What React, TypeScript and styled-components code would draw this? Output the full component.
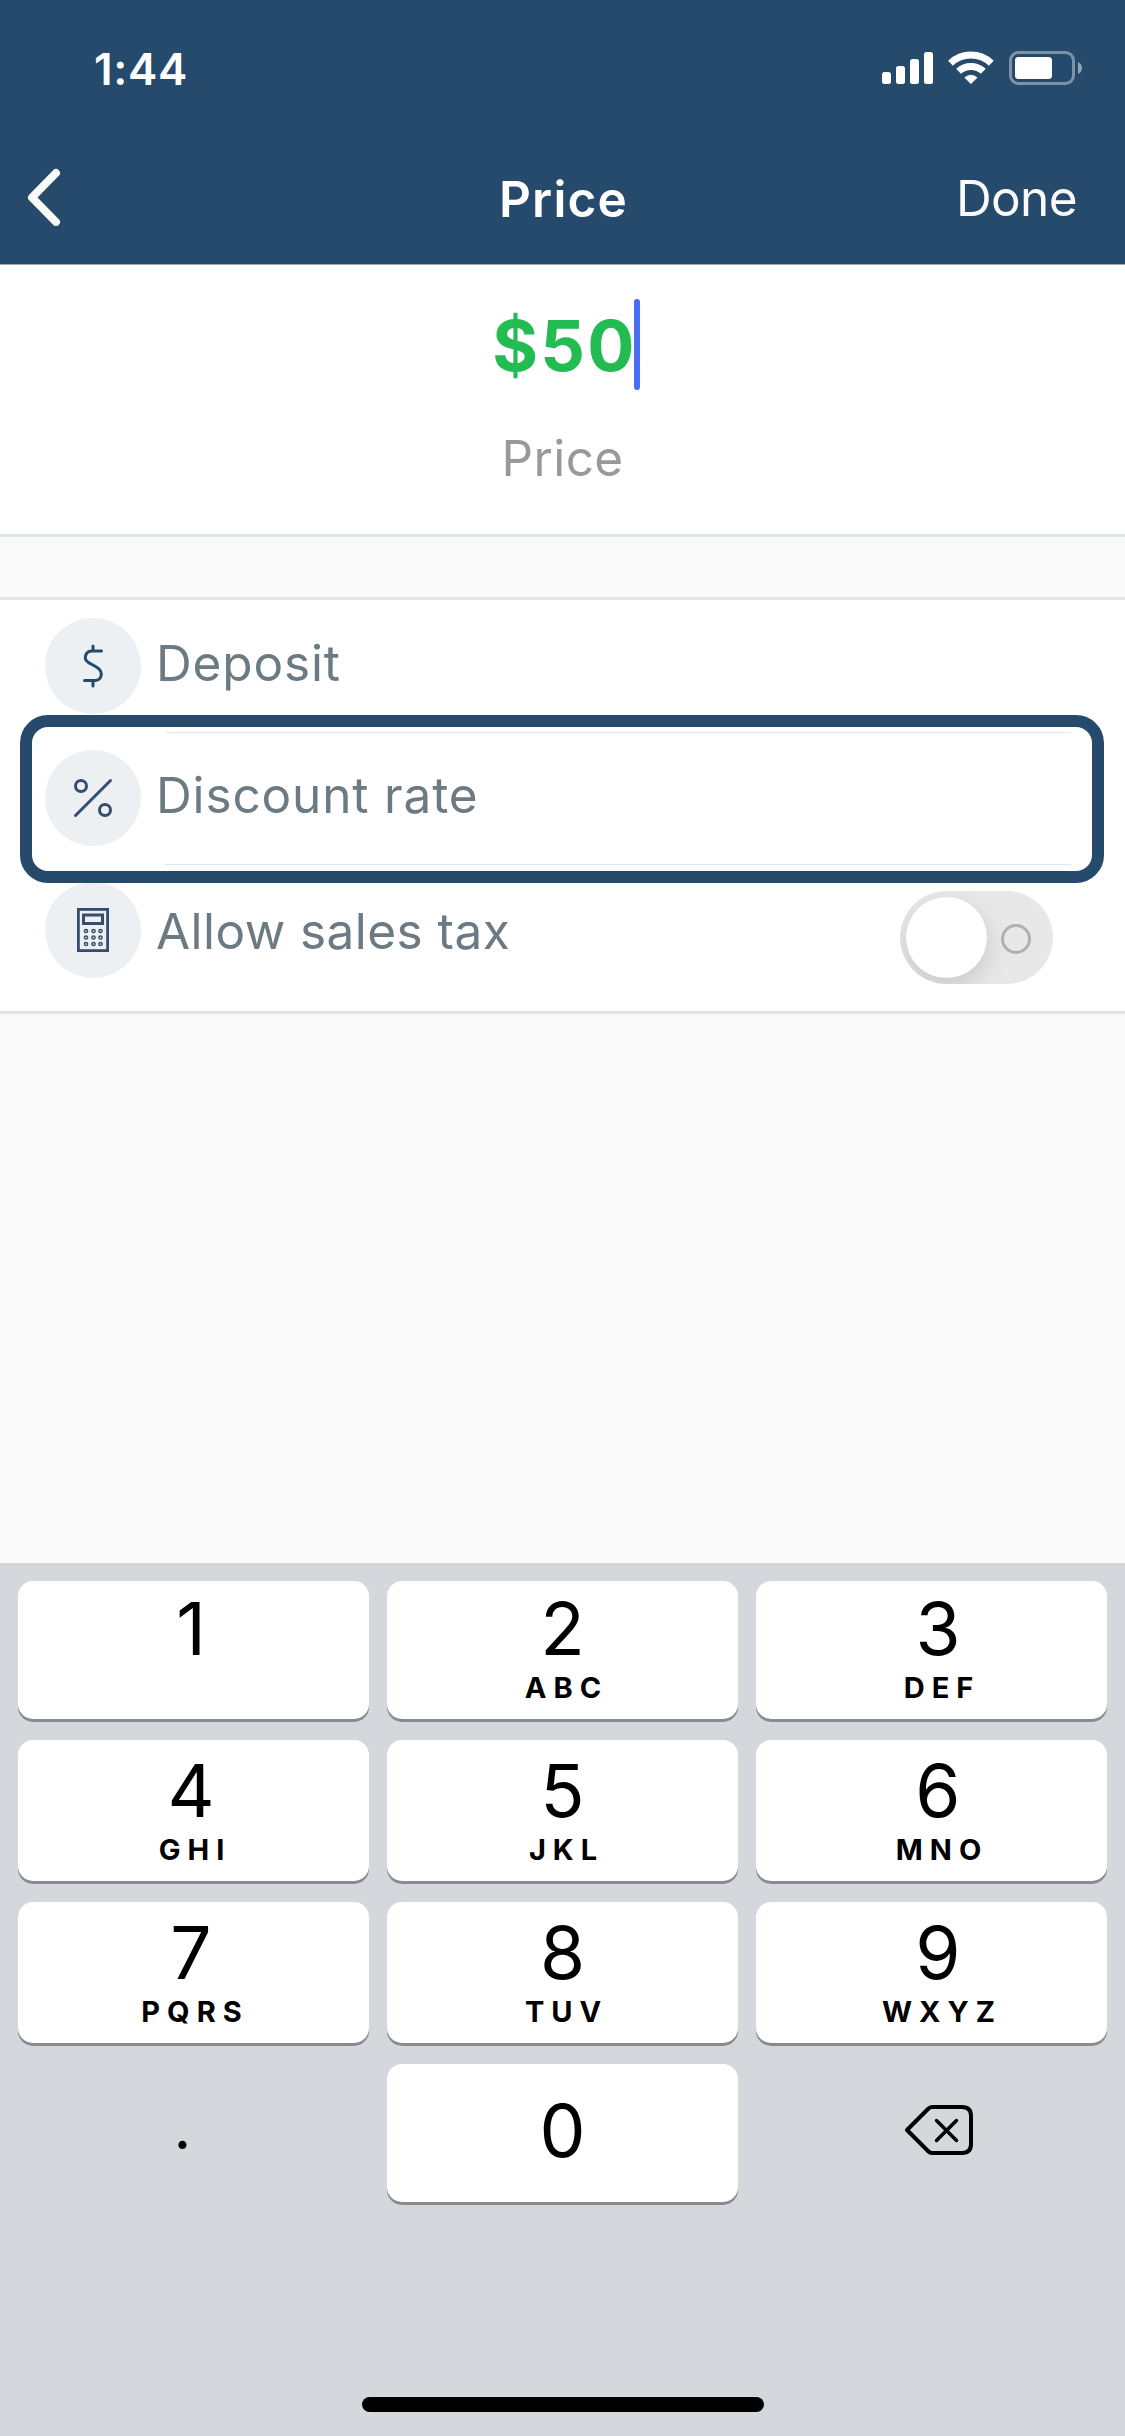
import React from "react";
import styled, { createGlobalStyle } from "styled-components";

const navy = "#254a6b";

const GlobalStyle = createGlobalStyle`
  *, *::before, *::after { box-sizing: border-box; }
  body { margin: 0; background: #fafafa; }
`;

const Screen = styled.div`
  width: 1125px;
  height: 2436px;
  display: flex;
  flex-direction: column;
  overflow: hidden;
  background: #fafafa;
  font-family: Inter, "Liberation Sans", sans-serif;
`;

const Header = styled.header`
  height: 265px;
  flex: none;
  background: ${navy};
  border-bottom: 1px solid #9aa9b4;
  color: #fff;
`;

const StatusBar = styled.div`
  height: 132px;
  padding: 3px 43px 0 94px;
  display: flex;
  align-items: center;
  justify-content: space-between;
`;

const Clock = styled.span`
  margin-top: 2px;
  font-size: 44px;
  font-weight: 600;
  line-height: 60px;
  letter-spacing: 0.7px;
`;

const StatusIcons = styled.svg`
  display: block;
  margin-top: 3px;
`;

const NavBar = styled.nav`
  height: 132px;
  padding: 0 48px 0 26px;
  display: grid;
  grid-template-columns: 1fr auto 1fr;
  align-items: center;
`;

const BackIcon = styled.svg`
  display: block;
  margin-bottom: 3px;
`;

const NavTitle = styled.h1`
  margin: 2px 0 0 24px;
  font-size: 49.5px;
  font-weight: 600;
  line-height: 60px;
  letter-spacing: 1.2px;
`;

const NavAction = styled.button`
  justify-self: end;
  padding: 0;
  border: 0;
  background: none;
  color: #fafaf8;
  font: 400 49.5px/60px Inter, "Liberation Sans", sans-serif;
  letter-spacing: -0.6px;
`;

const PricePanel = styled.section`
  height: 272px;
  flex: none;
  display: flex;
  flex-direction: column;
  align-items: center;
  background: #fff;
  border-bottom: 3px solid #dde5e7;
`;

const Amount = styled.div`
  height: 91px;
  margin-top: 34px;
  padding: 2px 0 0 7px;
  display: flex;
  align-items: center;
  color: #22bc53;
  font-size: 70px;
  font-weight: 700;
  letter-spacing: 2.2px;
`;

const Caret = styled.i`
  width: 6px;
  height: 91px;
  margin: -2px 0 0 -3px;
  border-radius: 3px;
  background: #466ff3;
`;

const AmountLabel = styled.div`
  margin-top: 38px;
  color: #999;
  font-size: 49.5px;
  line-height: 60px;
  letter-spacing: 0.4px;
`;

const Options = styled.section`
  position: relative;
  height: 417px;
  flex: none;
  margin-top: 60px;
  background: #fff;
  border: solid #dde5e7;
  border-width: 3px 0;
`;

const OptionRow = styled.div`
  height: 132px;
  padding: 18px 72px 0 45px;
  display: flex;
  align-items: flex-start;

  & + & {
    background: linear-gradient(#dde6ea, #dde6ea) 165px 0 / 906px 1px no-repeat;
  }
`;

const IconDisc = styled.span`
  width: 96px;
  height: 96px;
  flex: none;
  display: flex;
  align-items: center;
  justify-content: center;
  border-radius: 50%;
  background: #edf0f3;
`;

const OptionLabel = styled.span<{ $drop?: number; $tracking?: number }>`
  flex: 1;
  margin: ${({ $drop = 0 }) => 15 + $drop}px 0 0 15px;
  color: #6b7a83;
  font-size: 49.5px;
  line-height: 60px;
  letter-spacing: ${({ $tracking = 0.85 }) => $tracking}px;
`;

const Highlight = styled.div`
  position: absolute;
  top: 115px;
  left: 20px;
  width: 1084px;
  height: 168px;
  border: 12px solid ${navy};
  border-radius: 28px;
`;

const Toggle = styled.span`
  width: 153px;
  height: 93px;
  margin-top: 9px;
  padding: 6px 22px 6px 6px;
  display: flex;
  align-items: center;
  justify-content: space-between;
  overflow: hidden;
  border-radius: 47px;
  background: #e8e8e8;
`;

const Knob = styled.i`
  width: 81px;
  height: 81px;
  border-radius: 50%;
  background: #fff;
  box-shadow: 0 9px 24px rgba(0, 0, 0, 0.14);
`;

const OffMark = styled.i`
  width: 30px;
  height: 30px;
  margin-top: 3px;
  border: 3px solid #b0b0b0;
  border-radius: 50%;
`;

const Keyboard = styled.section`
  height: 873px;
  margin-top: auto;
  padding: 18px 18px 24px;
  display: flex;
  flex-direction: column;
  align-items: center;
  justify-content: space-between;
  background: #d4d7dc;
`;

const Keys = styled.div`
  display: grid;
  grid-template-columns: repeat(3, 351px);
  grid-template-rows: 138px 141px 141px 138px;
  gap: 21px 18px;
`;

const Key = styled.button<{ $shift: number; $plain?: boolean; $drop: number }>`
  padding: ${({ $drop }) => $drop}px 0 0 ${({ $plain, $shift }) => ($plain && $shift > 0 ? $shift * 2 : 0)}px;
  border: 0;
  border-radius: 15px;
  display: flex;
  flex-direction: column;
  align-items: center;
  text-indent: ${({ $shift }) => $shift * 2}px;
  background: ${({ $plain }) => ($plain ? "none" : "#fff")};
  box-shadow: ${({ $plain }) => ($plain ? "none" : "0 3px 0 #898b8f")};
  color: #000;
  font-family: Inter, "Liberation Sans", sans-serif;
`;

const Digit = styled.span`
  font-size: 73px;
  font-weight: 400;
  line-height: 76px;
`;

const Letters = styled.span`
  margin-top: 3px;
  padding-left: 8px;
  font-size: 29px;
  font-weight: 700;
  line-height: 36px;
  letter-spacing: 7px;
`;

const Point = styled.span`
  font-size: 62px;
  line-height: 76px;
`;

const HomeIndicator = styled.div`
  width: 402px;
  height: 15px;
  border-radius: 8px;
  background: #000;
`;

const DollarIcon = () => (
  <svg width="26" height="46" viewBox="0 0 26 46" fill="none" stroke={navy} strokeWidth="3" strokeLinecap="round">
    <path d="M13 3v4M13 39v4M21.500 8H12.500C5 8 3 16 8.500 19.500C11 21.200 15 22.700 18 25.200C24 30 21 37.500 15 37.500H4.500" />
  </svg>
);

const PercentIcon = () => (
  <svg width="40" height="40" viewBox="0 0 40 40" fill="none" stroke="#344d6c" strokeWidth="3" strokeLinecap="round">
    <path d="M2.500 37.500 37.500 2.500" />
    <circle cx="8" cy="8" r="5.500" />
    <circle cx="32" cy="32" r="5.500" />
  </svg>
);

const CalculatorIcon = () => (
  <svg width="32" height="44" viewBox="0 0 32 44" fill="none" stroke="#344d6c">
    <rect x="1.400" y="1.400" width="29.200" height="41.200" strokeWidth="2.800" />
    <rect x="6.500" y="7" width="19" height="8.500" strokeWidth="3" />
    {[23, 29.5, 36].flatMap((cy) =>
      [9, 16.5, 23.5].map((cx) => <circle key={`${cx}-${cy}`} cx={cx} cy={cy} r="1.600" strokeWidth="1.500" />)
    )}
  </svg>
);

const DeleteIcon = () => (
  <svg width="68" height="50" viewBox="0 0 68 50" fill="none" stroke="#000" strokeWidth="4" strokeLinecap="round" strokeLinejoin="round">
    <path d="M27 2h30q9 0 9 9v28q0 9-9 9H27q-2 0-4-2L2 25 23 4q2-2 4-2Z" />
    <path d="m31.500 15.500 20 20m0-20-20 20" strokeWidth="3.500" />
  </svg>
);

type KeyDef = { digit: string; letters?: string };

const keys: KeyDef[] = [
  { digit: "1" },
  { digit: "2", letters: "ABC" },
  { digit: "3", letters: "DEF" },
  { digit: "4", letters: "GHI" },
  { digit: "5", letters: "JKL" },
  { digit: "6", letters: "MNO" },
  { digit: "7", letters: "PQRS" },
  { digit: "8", letters: "TUV" },
  { digit: "9", letters: "WXYZ" },
];

const columnShift = [-2.5, 0, 6.5];

export default function App() {
  return (
    <Screen>
      <GlobalStyle />
      <Header>
        <StatusBar>
          <Clock>1:44</Clock>
          <StatusIcons width="200" height="36" viewBox="0 0 200 36" fill="#fff">
            <rect x="0" y="21" width="9" height="12" rx="2.500" />
            <rect x="14" y="15" width="9" height="18" rx="2.500" />
            <rect x="28" y="8" width="9" height="25" rx="2.500" />
            <rect x="42" y="1" width="9" height="32" rx="2.500" />
            <g fill="none" stroke="#fff" strokeWidth="7">
              <path d="M68.500 12.200a29.500 29.500 0 0 1 40.800 0" />
              <path d="M76.500 20.300a18.200 18.200 0 0 1 24.800 0" />
            </g>
            <path d="M82.300 26.500q6.600-5.400 13.200 0L88.900 33Z" />
            <rect x="128.500" y="1.500" width="63" height="31" rx="8" fill="none" stroke="#fff" strokeOpacity=".4" strokeWidth="3" />
            <rect x="133" y="6" width="37" height="22" rx="3.500" />
            <path d="M196 11q4 2 4 6t-4 6Z" fillOpacity=".5" />
          </StatusIcons>
        </StatusBar>
        <NavBar>
          <BackIcon width="36" height="58" viewBox="0 0 36 58" fill="none" stroke="#fafaf8" strokeWidth="8" strokeLinecap="round" strokeLinejoin="round">
            <path d="M30 5 6 29.500 30 54" />
          </BackIcon>
          <NavTitle>Price</NavTitle>
          <NavAction>Done</NavAction>
        </NavBar>
      </Header>

      <PricePanel>
        <Amount>
          $50
          <Caret />
        </Amount>
        <AmountLabel>Price</AmountLabel>
      </PricePanel>

      <Options>
        <OptionRow>
          <IconDisc><DollarIcon /></IconDisc>
          <OptionLabel>Deposit</OptionLabel>
        </OptionRow>
        <OptionRow>
          <IconDisc><PercentIcon /></IconDisc>
          <OptionLabel>Discount rate</OptionLabel>
        </OptionRow>
        <OptionRow>
          <IconDisc><CalculatorIcon /></IconDisc>
          <OptionLabel $drop={4} $tracking={0.45}>Allow sales tax</OptionLabel>
          <Toggle>
            <Knob />
            <OffMark />
          </Toggle>
        </OptionRow>
        <Highlight />
      </Options>

      <Keyboard>
        <Keys>
          {keys.map(({ digit, letters }, i) => (
            <Key key={digit} $shift={columnShift[i % 3]} $drop={i < 3 ? 10 : 13}>
              <Digit>{digit}</Digit>
              {letters && <Letters>{letters}</Letters>}
            </Key>
          ))}
          <Key $plain $shift={-11} $drop={25}><Point>.</Point></Key>
          <Key $shift={0} $drop={29}><Digit>0</Digit></Key>
          <Key $plain $shift={7.5} $drop={41}><DeleteIcon /></Key>
        </Keys>
        <HomeIndicator />
      </Keyboard>
    </Screen>
  );
}
